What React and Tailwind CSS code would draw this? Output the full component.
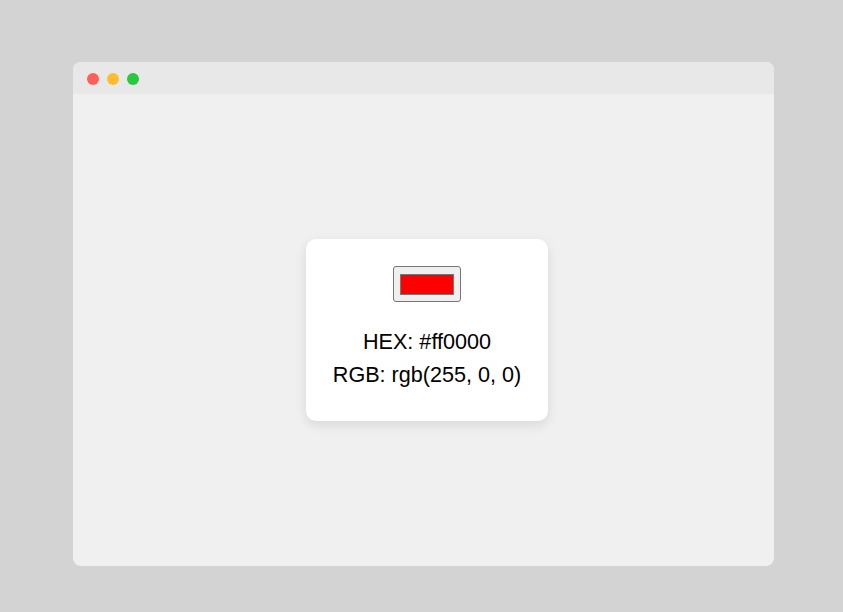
export default function App() {
  return (
    <div className="min-h-[612px] w-full bg-[#d3d3d3] pl-[73px] pt-[62px]" style={{ fontFamily: '"Liberation Sans", Arial, sans-serif' }}>
      <div className="w-[701px] h-[504px] bg-[#f0f0f0] rounded-[8px] overflow-hidden flex flex-col">
        <div className="h-[32px] bg-[#e8e8e8] flex items-start gap-[8px] pl-[14px] pt-[11px]">
          <span className="w-[12px] h-[12px] rounded-full bg-[#ff5f57]"></span>
          <span className="w-[12px] h-[12px] rounded-full bg-[#febc2e]"></span>
          <span className="w-[12px] h-[12px] rounded-full bg-[#28c840]"></span>
        </div>
        <div className="flex-1 flex items-center justify-center pl-[7px]">
          <div className="w-[242px] bg-white rounded-[10px] shadow-[0_4px_12px_rgba(0,0,0,0.1)] flex flex-col items-center pt-[27px] pb-[30px]">
            <div className="w-[68px] h-[36px] border border-[#767676] rounded-[3px] bg-[#efefef] flex items-center justify-center">
              <div className="w-[54px] h-[21px] border border-[#777777] bg-[#ff0000]"></div>
            </div>
            <div className="mt-[23px] text-[21.6px] leading-[33px] text-black text-center">
              <p>HEX: #ff0000</p>
              <p>RGB: rgb(255, 0, 0)</p>
            </div>
          </div>
        </div>
      </div>
    </div>
  );
}
